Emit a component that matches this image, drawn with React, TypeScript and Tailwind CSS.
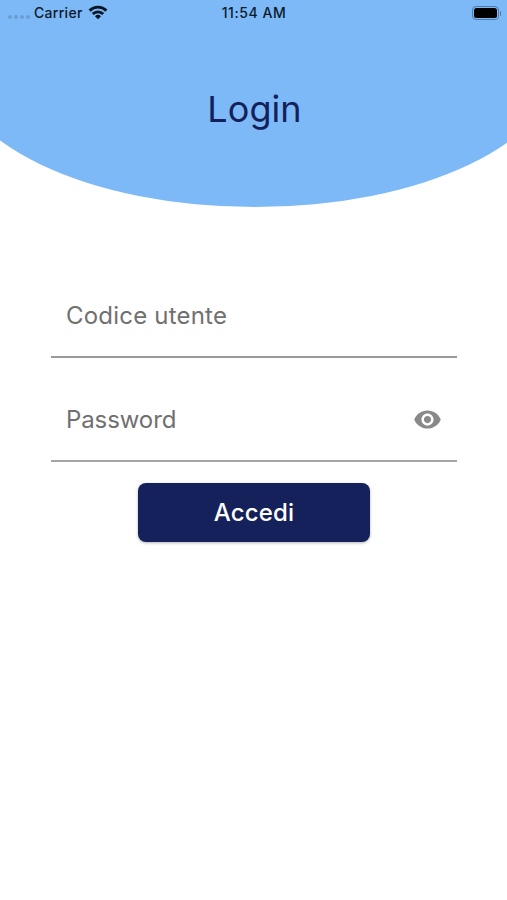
function StatusBar() {
  return (
    <div className="relative grid h-[26px] grid-cols-3 items-center text-[14px] font-medium text-[#0b1a2b]">
      <div className="flex items-center pl-2">
        <span className="mt-[8px] flex w-[26px] gap-[2px]">
          {[0, 1, 2, 3].map((i) => (
            <i key={i} className="size-[4px] rounded-full bg-[#6b9fd2]" />
          ))}
        </span>
        <span className="-mt-[2px] text-[14px] tracking-[0.3px]">Carrier</span>
        <svg className="-mt-[1px] ml-[5px] h-[15px] w-[20px]" viewBox="0 0 20 15" fill="none" stroke="#071524" strokeWidth="2.9">
          <path d="M1.6 5.6a12 12 0 0 1 16.8 0" />
          <path d="M4.8 9a7.4 7.4 0 0 1 10.4 0" />
          <path d="M10 14.2 7 11.2a4.3 4.3 0 0 1 6 0Z" fill="#071524" stroke="none" />
        </svg>
      </div>
      <span className="-mt-[2px] pl-[1px] text-center tracking-[0.55px]">11:54 AM</span>
      <div className="flex items-center justify-end pr-[6px]">
        <span className="h-[14px] w-[27px] rounded-[4px] border border-[#4e7ba8] p-[1px]">
          <i className="block h-full rounded-[2.5px] bg-black" />
        </span>
        <i className="ml-[1px] h-[5px] w-[1.5px] rounded-r-full bg-[#4e7ba8]" />
      </div>
    </div>
  );
}

export default function App() {
  return (
    <main className="h-[900px] w-[507px] overflow-hidden bg-white font-['Inter',sans-serif]">
      <header className="relative h-[207px] overflow-hidden">
        <div className="absolute top-0 left-[-49px] h-[206.5px] w-[608px] bg-[#7cb9f6] [border-bottom-left-radius:304px_146px] [border-bottom-right-radius:304px_146px]" />
        <StatusBar />
        <h1 className="relative mt-[60px] pl-[2px] text-center text-[36px] leading-[46px] tracking-[0.1px] text-[#14205c]">Login</h1>
      </header>
      <form className="mr-[50px] ml-[51px] mt-[67px] flex flex-col">
        <label className="flex h-[84px] items-center border-b-2 border-[#999] px-[15px] pt-[2px] text-[24px] tracking-[0.2px] text-[#707070]">
          Codice utente
        </label>
        <label className="mt-[20px] flex h-[84px] items-center justify-between border-b-2 border-[#a5a5a5] px-[15px] pt-[1px] text-[24px] tracking-[-0.1px] text-[#707070]">
          Password
          <svg className="size-[29px]" viewBox="0 0 24 24" fill="#898989">
            <path d="M12 4.5C7 4.5 2.73 7.61 1 12c1.73 4.39 6 7.5 11 7.5s9.27-3.11 11-7.5c-1.73-4.39-6-7.5-11-7.5zM12 17c-2.76 0-5-2.24-5-5s2.24-5 5-5 5 2.24 5 5-2.24 5-5 5zm0-8c-1.66 0-3 1.34-3 3s1.34 3 3 3 3-1.34 3-3-1.34-3-3-3z" />
          </svg>
        </label>
        <button type="button" className="mt-[21px] ml-[87px] h-[59px] w-[232px] rounded-[8px] bg-[#15215a] text-[24px] font-medium tracking-[0.2px] text-white shadow-[0_1px_3px_rgba(0,0,0,0.3)]">
          Accedi
        </button>
      </form>
    </main>
  );
}
